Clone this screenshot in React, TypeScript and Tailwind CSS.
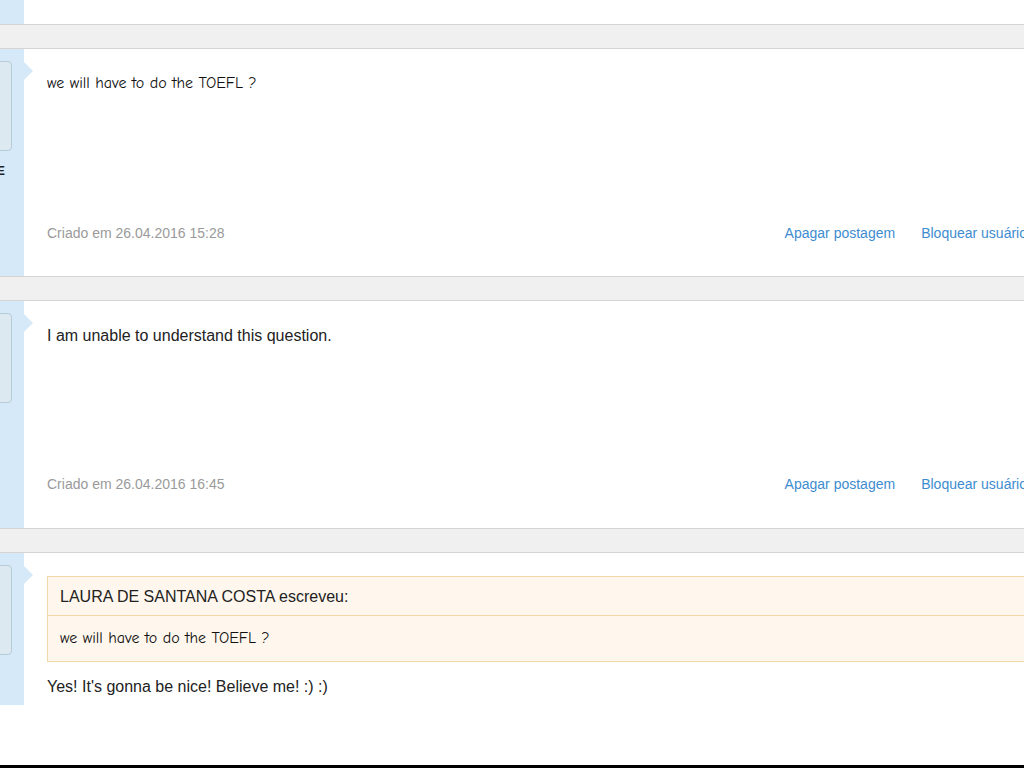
import React from "react";

const comic = "font-['Comic_Sans_MS','Comic_Neue','DejaVu_Sans',cursive]";

function Band() {
  return <div className="h-[25px] border-y border-[#d4d4d4] bg-[#f0f0f0]" />;
}

function Sidebar({ name }: { name?: string }) {
  return (
    <div className="relative w-[24px] shrink-0 overflow-hidden bg-[#d5e9f9]">
      <div className="ml-[-80px] w-[92px] pt-[12px]">
        <div className="h-[90px] rounded-sm border border-[#b7cbd7] bg-[#dde9f0]" />
        {name && (
          <p className="mt-[12px] mr-[7px] text-right text-[13px] font-bold leading-4 text-[#222] font-['Liberation_Sans',Arial,sans-serif]">
            {name}
          </p>
        )}
      </div>
    </div>
  );
}

function Pointer() {
  return (
    <div className="absolute left-[24px] top-[13px] h-0 w-0 border-y-[9px] border-l-[9px] border-y-transparent border-l-[#d5e9f9]" />
  );
}

function Footer({ date }: { date: string }) {
  return (
    <div className="flex items-center text-[14px] leading-5">
      <span className="text-[#9a9a9a]">Criado em {date}</span>
      <div className="ml-auto flex gap-[26px] text-[#3e8ccf]">
        <a href="#">Apagar postagem</a>
        <a href="#">Bloquear usuário</a>
      </div>
    </div>
  );
}

export default function App() {
  return (
    <div className="h-[768px] w-[1024px] overflow-hidden bg-white font-['Liberation_Sans',Arial,sans-serif] text-[#222]">
      <div className="w-[1050px]">
        {/* tail of previous post */}
        <div className="flex h-[24px]">
          <div className="w-[24px] bg-[#d5e9f9]" />
          <div className="flex-1" />
        </div>
        <Band />

        {/* post 1 */}
        <div className="relative flex h-[227px]">
          <Sidebar name="ESTUDANTE" />
          <Pointer />
          <div className="flex flex-1 flex-col justify-between pl-[23px] pr-[23px] pt-[24px] pb-[33px]">
            <p className={`${comic} text-[16px] leading-5 text-[#111]`}>we will have to do the TOEFL ?</p>
            <Footer date="26.04.2016 15:28" />
          </div>
        </div>
        <Band />

        {/* post 2 */}
        <div className="relative flex h-[227px]">
          <Sidebar />
          <Pointer />
          <div className="flex flex-1 flex-col justify-between pl-[23px] pr-[23px] pt-[25px] pb-[34px]">
            <p className="text-[16px] leading-5">I am unable to understand this question.</p>
            <Footer date="26.04.2016 16:45" />
          </div>
        </div>
        <Band />

        {/* post 3 */}
        <div className="relative flex h-[152px]">
          <Sidebar />
          <Pointer />
          <div className="flex-1 pl-[23px] pr-[23px] pt-[23px]">
            <div className="border border-[#f2d7a8] bg-[#fff7ed]">
              <div className="h-[39px] border-b border-[#f2d7a8] pl-[12px] text-[16px] leading-[39px]">
                LAURA DE SANTANA COSTA escreveu:
              </div>
              <div className={`h-[45px] pl-[12px] ${comic} text-[16px] leading-[45px] text-[#111]`}>
                we will have to do the TOEFL ?
              </div>
            </div>
            <p className="mt-[15px] text-[16px] leading-5">Yes! It's gonna be nice! Believe me! :) :)</p>
          </div>
        </div>

        <div className="h-[60px]" />
        <div className="h-[3px] bg-black" />
      </div>
    </div>
  );
}
